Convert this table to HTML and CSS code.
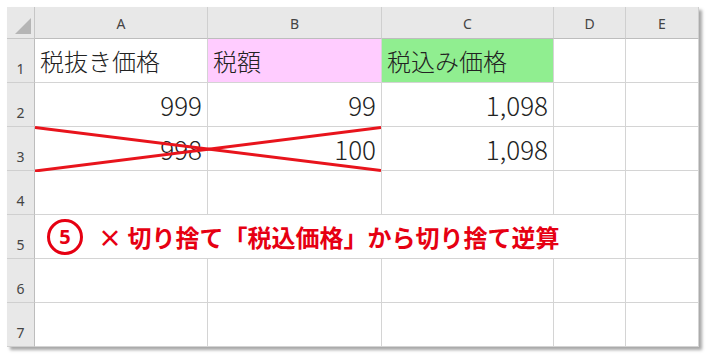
FILE: index.html
```html
<!DOCTYPE html>
<html lang="ja">
<head>
<meta charset="utf-8">
<title>税込価格から逆算</title>
<link rel="stylesheet" href="styles.css">
</head>
<body>
<div class="sheet">
  <div class="corner"><span class="tri"></span></div>
  <div class="colhead">A</div>
  <div class="colhead">B</div>
  <div class="colhead">C</div>
  <div class="colhead">D</div>
  <div class="colhead">E</div>

  <div class="rowhead">1</div>
  <div class="cell txt">税抜き価格</div>
  <div class="cell txt pink">税額</div>
  <div class="cell txt green">税込み価格</div>
  <div class="cell"></div>
  <div class="cell"></div>

  <div class="rowhead">2</div>
  <div class="cell num">999</div>
  <div class="cell num">99</div>
  <div class="cell num">1,098</div>
  <div class="cell"></div>
  <div class="cell"></div>

  <div class="rowhead">3</div>
  <div class="cell num">998</div>
  <div class="cell num">100</div>
  <div class="cell num">1,098</div>
  <div class="cell"></div>
  <div class="cell"></div>

  <div class="rowhead">4</div>
  <div class="cell"></div>
  <div class="cell"></div>
  <div class="cell"></div>
  <div class="cell"></div>
  <div class="cell"></div>

  <div class="rowhead">5</div>
  <div class="cell note">
    <span class="badge">5</span>
    <span class="notetext">× 切り捨て「税込価格」から切り捨て逆算</span>
  </div>
  <div class="cell"></div>

  <div class="rowhead">6</div>
  <div class="cell"></div>
  <div class="cell"></div>
  <div class="cell"></div>
  <div class="cell"></div>
  <div class="cell"></div>

  <div class="rowhead">7</div>
  <div class="cell"></div>
  <div class="cell"></div>
  <div class="cell"></div>
  <div class="cell"></div>
  <div class="cell"></div>

  <svg class="strike" width="346" height="46" viewBox="0 0 346 46" aria-hidden="true">
    <line x1="0" y1="1.5" x2="346" y2="44.5" stroke="#e8141c" stroke-width="3"/>
    <line x1="0" y1="45" x2="346" y2="1.5" stroke="#e8141c" stroke-width="3"/>
  </svg>
</div>
</body>
</html>
```

FILE: styles.css
```css
html, body {
  margin: 0;
  padding: 0;
  background: #ffffff;
}

body {
  padding: 7px;
  font-family: "Noto Sans CJK JP", "Noto Sans", sans-serif;
}

.sheet {
  position: relative;
  display: grid;
  grid-template-columns: 28px 173px 174px 172px 72px 73px;
  grid-template-rows: 32px repeat(7, 44px);
  width: 692px;
  box-shadow: 3px 3px 3px rgba(0, 0, 0, 0.35);
  background: #ffffff;
}

.corner {
  position: relative;
  background: #e8e8e8;
  border-right: 1px solid #c6c6c6;
  border-bottom: 1px solid #c6c6c6;
  box-sizing: border-box;
}

.tri {
  position: absolute;
  right: 3px;
  bottom: 4px;
  width: 0;
  height: 0;
  border-left: 16px solid transparent;
  border-bottom: 16px solid #b5b5b5;
}

.colhead {
  display: flex;
  align-items: flex-end;
  justify-content: center;
  padding-bottom: 5px;
  box-sizing: border-box;
  background: #e8e8e8;
  border-right: 1px solid #cfcfcf;
  border-bottom: 1px solid #bdbdbd;
  font-family: "Noto Sans", sans-serif;
  font-size: 14px;
  color: #444444;
}

.rowhead {
  display: flex;
  align-items: flex-end;
  justify-content: center;
  padding-bottom: 4px;
  box-sizing: border-box;
  background: #e8e8e8;
  border-right: 1px solid #bdbdbd;
  border-bottom: 1px solid #cfcfcf;
  font-family: "Noto Sans", sans-serif;
  font-size: 14px;
  color: #444444;
}

.cell {
  display: flex;
  align-items: center;
  box-sizing: border-box;
  border-right: 1px solid #d4d4d4;
  border-bottom: 1px solid #d4d4d4;
  color: #222222;
  font-size: 24px;
  font-weight: 300;
  white-space: nowrap;
}

.txt {
  padding-left: 5px;
}

.num {
  justify-content: flex-end;
  padding-right: 5px;
  font-size: 26px;
}

.pink {
  background: #ffccff;
}

.green {
  background: #90ee90;
}

.note {
  grid-column: span 4;
  padding-left: 12px;
  gap: 15px;
  color: #e60012;
  font-weight: 700;
}

.badge {
  display: flex;
  align-items: center;
  justify-content: center;
  width: 36px;
  height: 36px;
  box-sizing: border-box;
  border: 3px solid #e60012;
  border-radius: 50%;
  font-family: "Noto Sans", sans-serif;
  font-size: 20px;
  font-weight: 700;
  line-height: 1;
}

.notetext {
  font-size: 24px;
}

.strike {
  position: absolute;
  left: 28px;
  top: 119px;
}
```
